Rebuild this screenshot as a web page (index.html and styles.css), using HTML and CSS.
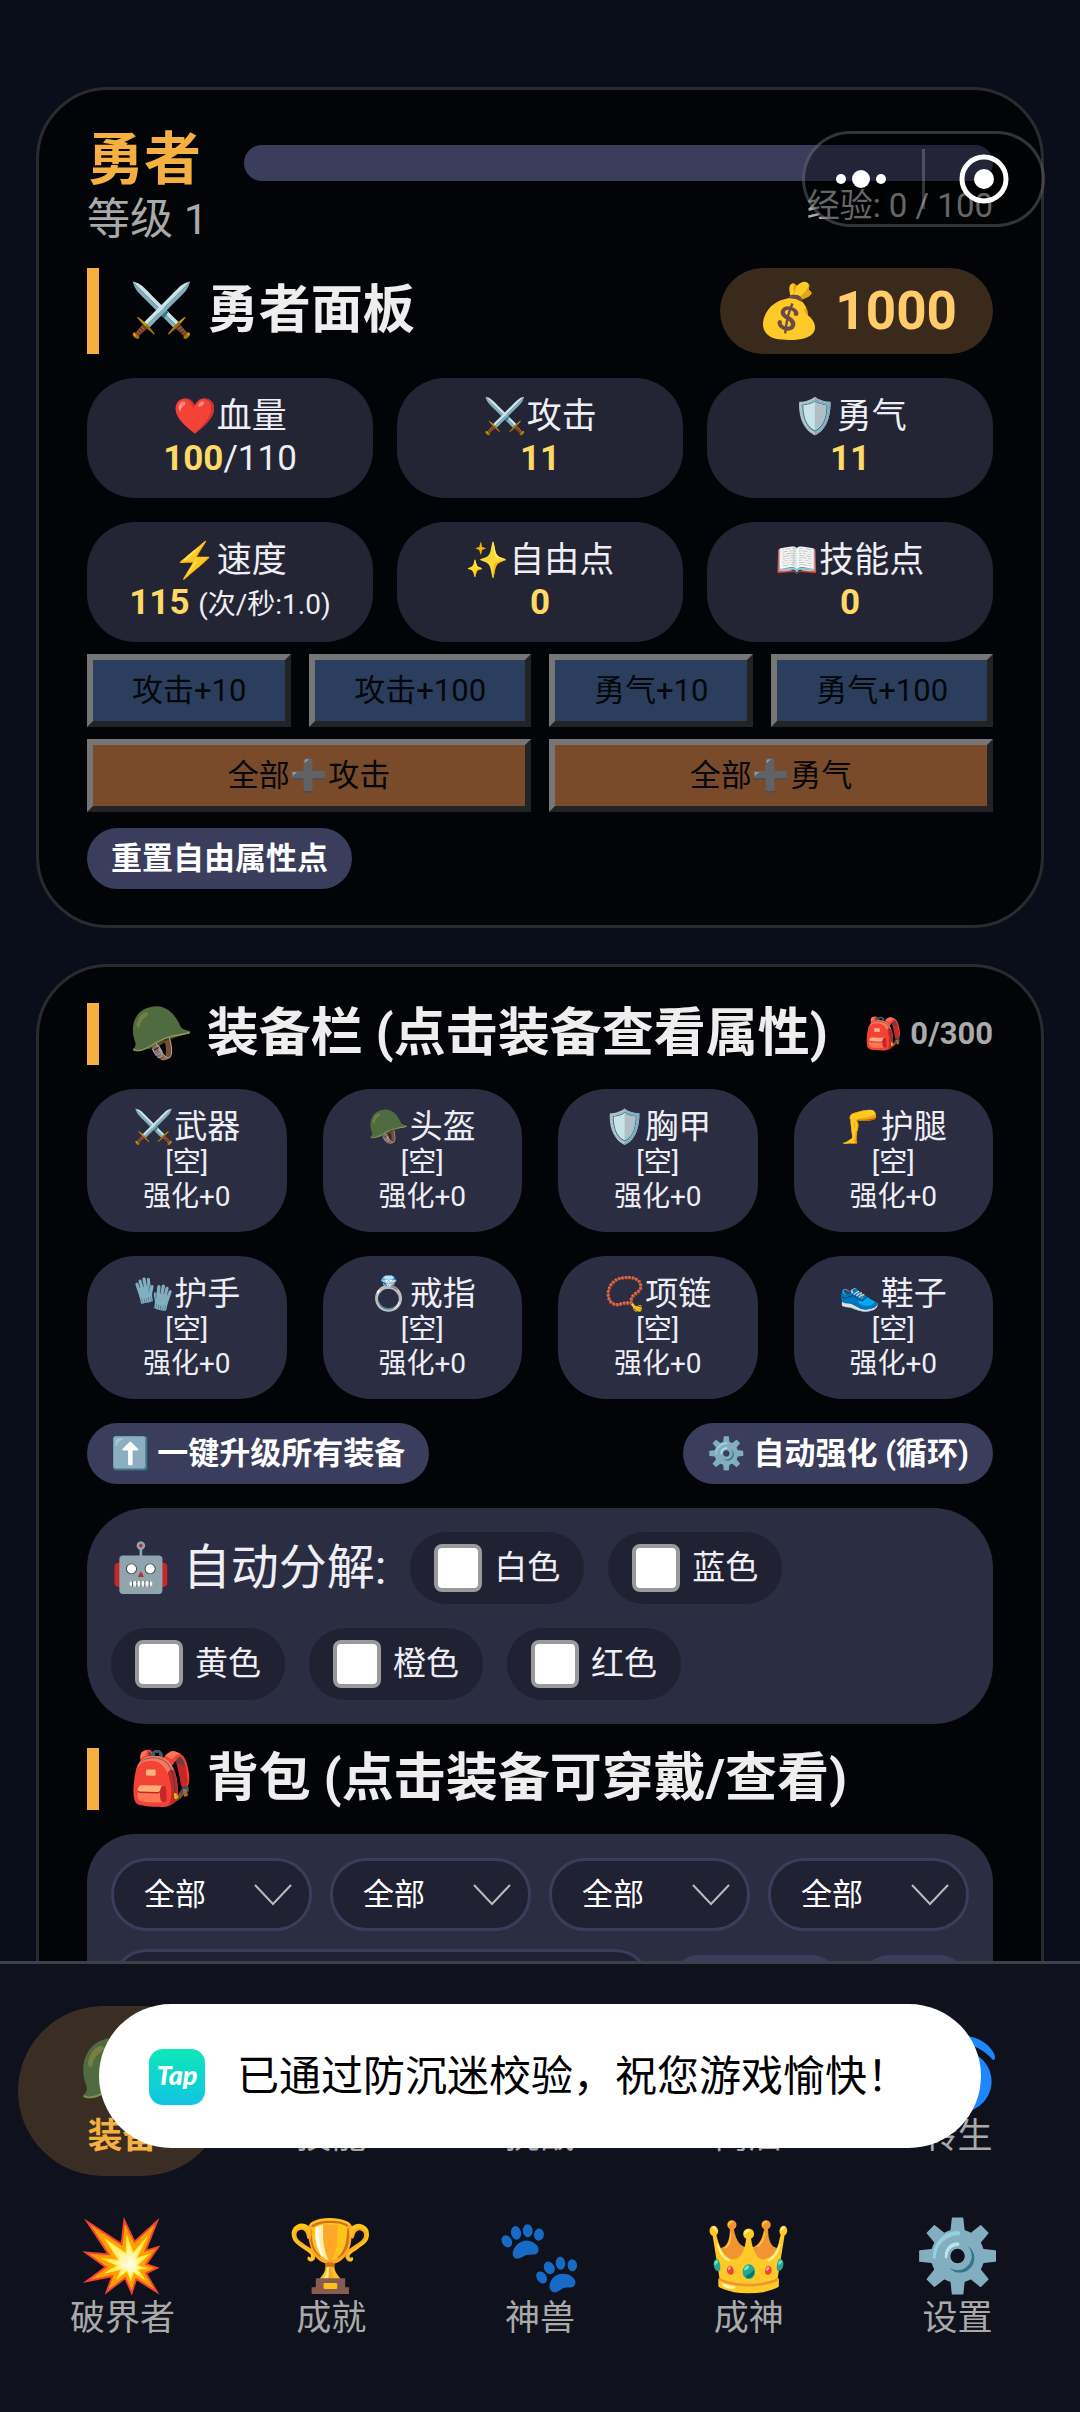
FILE: index.html
```
<!DOCTYPE html>
<html lang="zh-CN">
<head>
  <meta charset="UTF-8" />
  <meta name="viewport" content="width=device-width, initial-scale=1.0"/>
  <title>勇者</title>
  <link rel="stylesheet" href="styles.css">
</head>
<body>
  <main class="screen">
    <section class="card">
      <header class="hero">
        <div class="hero-id">
          <h1 class="hero-name">勇者</h1>
          <div class="hero-level">等级 1</div>
        </div>
        <div class="hero-exp">
          <div class="exp-bar"></div>
          <div class="exp-text">经验: 0 / 100</div>
        </div>
      </header>

      <div class="title title-hero">
        <h2>⚔️ 勇者面板</h2>
        <span class="gold">💰 1000</span>
      </div>

      <div class="stats">
        <div class="stat">❤️血量<br><b>100</b>/110</div>
        <div class="stat">⚔️攻击<br><b>11</b></div>
        <div class="stat">🛡️勇气<br><b>11</b></div>
        <div class="stat">⚡速度<br><b>115</b> <small>(次/秒:1.0)</small></div>
        <div class="stat">✨自由点<br><b>0</b></div>
        <div class="stat">📖技能点<br><b>0</b></div>
      </div>

      <div class="points">
        <div class="points-pair">
          <button class="btn-add" disabled>攻击+10</button>
          <button class="btn-add" disabled>攻击+100</button>
        </div>
        <div class="points-pair">
          <button class="btn-add" disabled>勇气+10</button>
          <button class="btn-add" disabled>勇气+100</button>
        </div>
        <button class="btn-add btn-all" disabled>全部➕攻击</button>
        <button class="btn-add btn-all" disabled>全部➕勇气</button>
      </div>
      <button class="btn">重置自由属性点</button>
    </section>

    <section class="card">
      <div class="title">
        <h2>🪖 装备栏 (点击装备查看属性)</h2>
        <span class="count">🎒 0/300</span>
      </div>
      <div class="slots">
        <button class="slot"><span>⚔️武器</span>[空]<br>强化+0</button>
        <button class="slot"><span>🪖头盔</span>[空]<br>强化+0</button>
        <button class="slot"><span>🛡️胸甲</span>[空]<br>强化+0</button>
        <button class="slot"><span>🦵护腿</span>[空]<br>强化+0</button>
        <button class="slot"><span>🧤护手</span>[空]<br>强化+0</button>
        <button class="slot"><span>💍戒指</span>[空]<br>强化+0</button>
        <button class="slot"><span>📿项链</span>[空]<br>强化+0</button>
        <button class="slot"><span>👟鞋子</span>[空]<br>强化+0</button>
      </div>
      <div class="actions">
        <button class="btn">⬆️ 一键升级所有装备</button>
        <button class="btn">⚙️ 自动强化 (循环)</button>
      </div>

      <div class="auto">
        <span class="auto-label">🤖 自动分解:</span>
        <label class="check"><input type="checkbox">白色</label>
        <label class="check"><input type="checkbox">蓝色</label>
        <label class="check"><input type="checkbox">黄色</label>
        <label class="check"><input type="checkbox">橙色</label>
        <label class="check"><input type="checkbox">红色</label>
      </div>

      <div class="title title-bag">
        <h2>🎒 背包 (点击装备可穿戴/查看)</h2>
      </div>
      <div class="bag">
        <div class="filters">
          <div class="select"><select aria-label="部位"><option>全部</option></select><svg viewBox="0 0 38 22"><path d="M1 1l18 19L37 1"/></svg></div>
          <div class="select"><select aria-label="品质"><option>全部</option></select><svg viewBox="0 0 38 22"><path d="M1 1l18 19L37 1"/></svg></div>
          <div class="select"><select aria-label="等级"><option>全部</option></select><svg viewBox="0 0 38 22"><path d="M1 1l18 19L37 1"/></svg></div>
          <div class="select"><select aria-label="属性"><option>全部</option></select><svg viewBox="0 0 38 22"><path d="M1 1l18 19L37 1"/></svg></div>
        </div>
        <div class="search">
          <input type="text" aria-label="搜索装备">
          <button class="btn">一键分解</button>
          <button class="btn">搜索</button>
        </div>
      </div>
    </section>
  </main>

  <nav class="nav">
    <a class="nav-item active" href="#equip"><span class="nav-icon">🪖</span>装备</a>
    <a class="nav-item" href="#skill"><span class="nav-icon">📖</span>技能</a>
    <a class="nav-item" href="#fight"><span class="nav-icon">⚔️</span>挑战</a>
    <a class="nav-item" href="#shop"><span class="nav-icon">🛒</span>商店</a>
    <a class="nav-item" href="#rebirth"><span class="nav-icon">🌀</span>转生</a>
    <a class="nav-item" href="#breaker"><span class="nav-icon">💥</span>破界者</a>
    <a class="nav-item" href="#achieve"><span class="nav-icon">🏆</span>成就</a>
    <a class="nav-item" href="#beast"><span class="nav-icon">🐾</span>神兽</a>
    <a class="nav-item" href="#god"><span class="nav-icon">👑</span>成神</a>
    <a class="nav-item" href="#settings"><span class="nav-icon">⚙️</span>设置</a>
  </nav>

  <div class="capsule">
    <button aria-label="更多">
      <svg viewBox="0 0 60 60"><circle cx="7" cy="30" r="5"/><circle cx="27" cy="30" r="9"/><circle cx="47" cy="30" r="5"/></svg>
    </button>
    <button aria-label="关闭">
      <svg viewBox="0 0 60 60"><circle class="ring" cx="30" cy="30" r="22"/><circle cx="30" cy="30" r="10"/></svg>
    </button>
  </div>

  <div class="toast" role="status">
    <span class="tap">Tap</span>
    已通过防沉迷校验，祝您游戏愉快！
  </div>
</body>
</html>
```
FILE: styles.css
```
* {
  box-sizing: border-box;
}
body {
  margin: 0;
  height: 100vh;
  display: flex;
  flex-direction: column;
  background: #0a0d1a;
  color: #eeeef4;
  font-family: Roboto, "Noto Sans CJK SC", "Noto Color Emoji", sans-serif;
  font-size: 35px;
  line-height: 42px;
}
h1, h2 {
  margin: 0;
}
button, input, select {
  font-family: inherit;
  font-size: 31px;
  line-height: 37px;
}
.screen {
  flex: 1;
  min-height: 0;
  overflow: hidden;
  padding: 87px 36px 0;
}
.card {
  background: #030407;
  border: 3px solid #2a2b2f;
  border-radius: 72px;
  padding: 36px 48px;
  margin-bottom: 36px;
}

/* hero */
.hero {
  display: flex;
  gap: 36px;
}
.hero-name {
  color: #f5b041;
  font-size: 57px;
  line-height: 68px;
}
.hero-level {
  color: #aaa;
  font-size: 43px;
  line-height: 50px;
}
.hero-exp {
  flex: 1;
  padding-top: 19px;
}
.exp-bar {
  height: 36px;
  border-radius: 18px;
  background: #3b3d5c;
}
.exp-text {
  color: #aaa;
  font-size: 33px;
  line-height: 50px;
  text-align: right;
}
.title {
  display: flex;
  align-items: center;
  justify-content: space-between;
  border-left: 12px solid #f5b041;
  padding-left: 30px;
  margin-bottom: 24px;
}
.title h2 {
  font-size: 52px;
  line-height: 62px;
  color: #eee;
  white-space: nowrap;
}
.title-hero {
  margin-top: 24px;
}
.gold {
  padding: 12px 36px;
  border-radius: 43px;
  background: #3a2a1b;
  color: #ffcb6b;
  font-size: 53px;
  font-weight: bold;
  line-height: 62px;
}
.stats {
  display: grid;
  grid-template-columns: repeat(3, 1fr);
  gap: 24px;
}
.stat {
  padding: 18px 12px;
  border-radius: 48px;
  background: #232535;
  text-align: center;
  white-space: nowrap;
}
.stat b {
  color: #ffd966;
}
.stat small {
  font-size: 28px;
  line-height: 28px;
}
.points {
  display: grid;
  grid-template-columns: 1fr 1fr;
  gap: 12px 18px;
  margin: 12px 0 16px;
}
.points-pair {
  display: flex;
  gap: 18px;
}
.btn-add {
  flex: 1 1 auto;
  padding: 12px 0;
  border: 6px solid;
  border-color: #767676 #222324 #222324 #767676;
  background: #2c3e5e;
  color: #05070b;
}
.btn-all {
  background: #7a4b2a;
}
.btn {
  padding: 12px 24px;
  border: 0;
  border-radius: 31px;
  background: #3b3d5c;
  color: #fff;
  font-weight: bold;
}

/* equipment */
.count {
  color: #aaa;
  font-size: 31px;
  font-weight: bold;
}
.slots {
  display: grid;
  grid-template-columns: repeat(4, 1fr);
  gap: 24px 36px;
}
.slot {
  padding: 18px 0;
  border: 0;
  border-radius: 48px;
  background: #2b2d42;
  color: inherit;
  font-size: 28px;
  line-height: 34px;
}
.slot span {
  display: block;
  font-size: 33px;
  line-height: 39px;
}
.actions {
  display: flex;
  justify-content: space-between;
  margin: 24px 0;
}
.auto {
  display: flex;
  flex-wrap: wrap;
  gap: 24px;
  padding: 24px;
  border-radius: 60px;
  background: #2b2d42;
}
.auto-label {
  font-size: 48px;
  line-height: 72px;
}
.check {
  display: flex;
  align-items: center;
  gap: 12px;
  padding: 12px 24px;
  border-radius: 36px;
  background: #202133;
  font-size: 33px;
}
.check input {
  appearance: none;
  width: 48px;
  height: 48px;
  margin: 0;
  border: 4px solid #9a9a9a;
  border-radius: 8px;
  background: #fff;
}
.title-bag {
  margin-top: 24px;
}
.bag {
  padding: 24px;
  border-radius: 48px;
  background: #2b2d42;
}
.filters {
  display: grid;
  grid-template-columns: repeat(4, 1fr);
  gap: 18px;
  margin-bottom: 18px;
}
.select {
  position: relative;
}
.select select {
  appearance: none;
  width: 100%;
  height: 73px;
  padding: 0 30px;
  border: 3px solid #3b3d5c;
  border-radius: 36px;
  background: #202133;
  color: #fff;
}
.select svg {
  position: absolute;
  right: 20px;
  top: 26px;
  width: 38px;
  fill: none;
  stroke: #bbb;
  stroke-width: 2;
  pointer-events: none;
}
.search {
  display: flex;
  align-items: center;
  gap: 18px;
}
.search input {
  flex: 1;
  min-width: 0;
  height: 73px;
  border: 3px solid #3b3d5c;
  border-radius: 36px;
  background: #202133;
}

/* bottom menu */
.nav {
  display: grid;
  grid-template-columns: repeat(5, 1fr);
  gap: 12px 0;
  padding: 42px 18px 54px;
  border-top: 3px solid #3d3f4a;
  background: #0f111c;
}
.nav-item {
  height: 170px;
  padding-top: 26px;
  border-radius: 85px;
  color: #aaa;
  text-align: center;
  text-decoration: none;
}
.nav-item.active {
  background: #3a2d24;
  color: #f5b041;
  font-weight: bold;
}
.nav-icon {
  display: block;
  font-size: 70px;
  line-height: 84px;
}

/* overlays */
.capsule {
  position: fixed;
  top: 131px;
  right: 35px;
  width: 243px;
  height: 96px;
  display: flex;
  align-items: center;
  border: 3px solid rgba(255, 255, 255, 0.2);
  border-radius: 48px;
  background: rgba(0, 0, 0, 0.4);
}
.capsule button {
  flex: 1;
  height: 60px;
  padding: 0;
  border: 0;
  background: none;
}
.capsule button + button {
  border-left: 3px solid rgba(255, 255, 255, 0.2);
}
.capsule svg {
  width: 60px;
  height: 60px;
  fill: #fff;
}
.capsule .ring {
  fill: none;
  stroke: #fff;
  stroke-width: 5;
}
.toast {
  position: fixed;
  left: 99px;
  right: 99px;
  bottom: 264px;
  height: 144px;
  display: flex;
  align-items: center;
  gap: 32px;
  padding: 2px 0 0 50px;
  border-radius: 72px;
  background: #fff;
  color: #000;
  font-size: 42px;
  white-space: nowrap;
}
.tap {
  width: 56px;
  height: 56px;
  border-radius: 14px;
  background: linear-gradient(#0ce8b8, #12c4e2);
  color: #fff;
  font-family: Lato, sans-serif;
  font-size: 27px;
  font-weight: 900;
  font-style: italic;
  line-height: 52px;
  text-align: center;
}
```
